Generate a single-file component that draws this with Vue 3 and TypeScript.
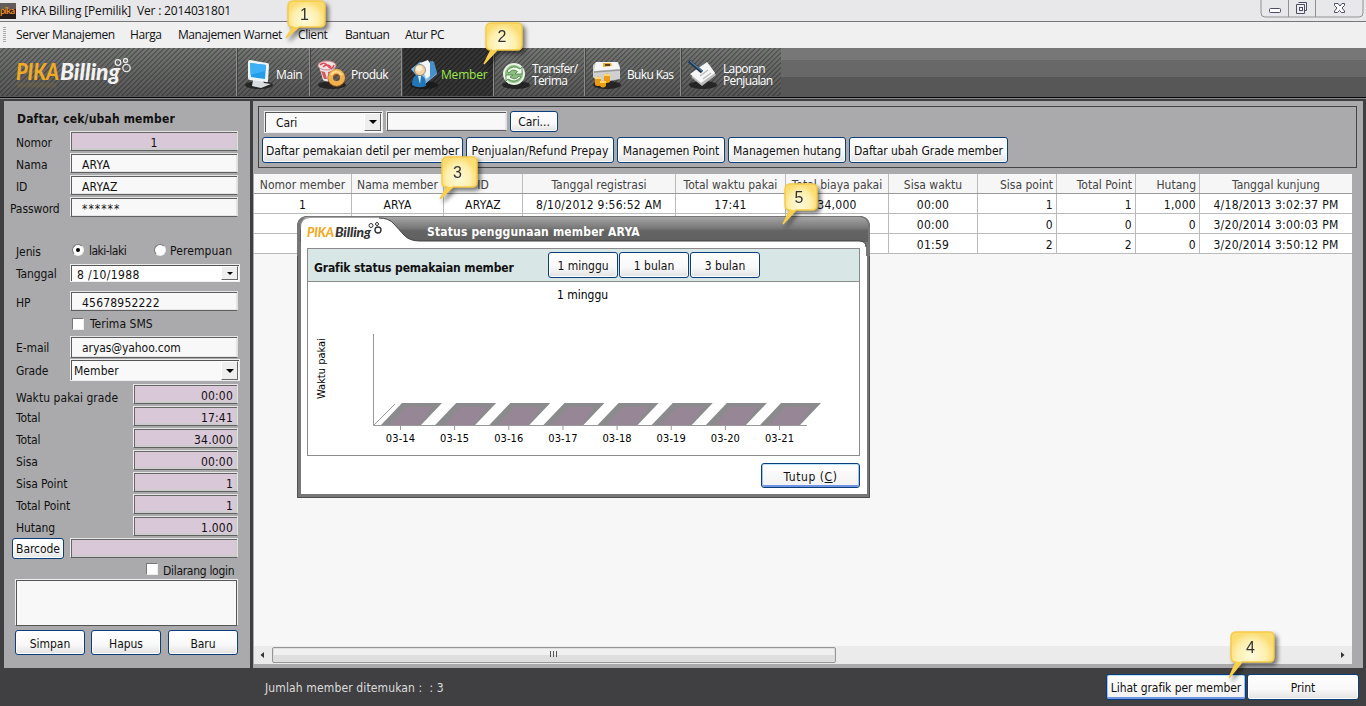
<script setup lang="ts">
interface Tool { id: string; label: string; width: number }
interface Column { title: string; width: number; align: 'center' | 'right' }

const menus = [
  { label: 'Server Manajemen', width: 114 },
  { label: 'Harga', width: 48 },
  { label: 'Manajemen Warnet', width: 120 },
  { label: 'Client', width: 47 },
  { label: 'Bantuan', width: 60 },
  { label: 'Atur PC', width: 60 },
]
const tools: Tool[] = [
  { id: 'main', label: 'Main', width: 73 },
  { id: 'produk', label: 'Produk', width: 92 },
  { id: 'member', label: 'Member', width: 92 },
  { id: 'transfer', label: 'Transfer/\nTerima', width: 91 },
  { id: 'kas', label: 'Buku Kas', width: 96 },
  { id: 'laporan', label: 'Laporan\nPenjualan', width: 101 },
]
const identity = [
  { label: 'Nomor', value: '1', cls: 'locked mid' },
  { label: 'Nama', value: 'ARYA', cls: '' },
  { label: 'ID', value: 'ARYAZ', cls: '' },
  { label: 'Password', value: '******', cls: 'wide' },
]
const totals = [
  { label: 'Waktu pakai grade', value: '00:00' },
  { label: 'Total', value: '17:41' },
  { label: 'Total', value: '34.000' },
  { label: 'Sisa', value: '00:00' },
  { label: 'Sisa Point', value: '1' },
  { label: 'Total Point', value: '1' },
  { label: 'Hutang', value: '1.000' },
]
const actions = [
  { label: 'Daftar pemakaian detil per member', width: 201 },
  { label: 'Penjualan/Refund Prepay', width: 148 },
  { label: 'Managemen Point', width: 108 },
  { label: 'Managemen hutang', width: 118 },
  { label: 'Daftar ubah Grade member', width: 159 },
]
const columns: Column[] = [
  { title: 'Nomor member', width: 98, align: 'center' },
  { title: 'Nama member', width: 92, align: 'center' },
  { title: 'ID', width: 79, align: 'center' },
  { title: 'Tanggal registrasi', width: 153, align: 'center' },
  { title: 'Total waktu pakai', width: 110, align: 'center' },
  { title: 'Total biaya pakai', width: 103, align: 'center' },
  { title: 'Sisa waktu', width: 89, align: 'center' },
  { title: 'Sisa point', width: 79, align: 'right' },
  { title: 'Total Point', width: 79, align: 'right' },
  { title: 'Hutang', width: 64, align: 'right' },
  { title: 'Tanggal kunjung', width: 152, align: 'center' },
]
const rows: string[][] = [
  ['1', 'ARYA', 'ARYAZ', '8/10/2012 9:56:52 AM', '17:41', '34,000', '00:00', '1', '1', '1,000', '4/18/2013 3:02:37 PM'],
  ['', '', '', '', '', '', '00:00', '0', '0', '0', '3/20/2014 3:00:03 PM'],
  ['', '', '', '', '', '', '01:59', '2', '2', '0', '3/20/2014 3:50:12 PM'],
]
const gridColumns = columns.map((c) => c.width + 'px').join(' ')
const days = ['03-14', '03-15', '03-16', '03-17', '03-18', '03-19', '03-20', '03-21']
const callouts = [
  { n: 1, x: 284, y: 0, w: 38, h: 27, tail: 11 },
  { n: 2, x: 482, y: 22, w: 37, h: 28, tail: 14 },
  { n: 3, x: 438, y: 156, w: 36, h: 31, tail: 12 },
  { n: 4, x: 1227, y: 631, w: 44, h: 31, tail: 16 },
  { n: 5, x: 781, y: 183, w: 33, h: 27, tail: 14 },
]
</script>

<template>
  <div class="window">
    <header class="titlebar">
      <svg class="app-icon" width="16" height="16"><rect width="16" height="16" fill="#251d1b" /><path d="M0 0H16V6H0Z" fill="#625d5b" /><text x="0" y="11" textLength="15" font-family="Lato" font-size="9" font-weight="700" fill="#e78c28">pika</text></svg>
      <span>PIKA Billing [Pemilik]&nbsp; Ver : 2014031801</span>
      <svg class="controls" width="104" height="19" fill="none">
        <path d="M1 -1V13Q1 17 5 17H99Q103 17 103 13V-1M28.500 0V17M55.500 0V17" stroke="#929295" />
        <rect x="9.500" y="8.500" width="11" height="4" rx="1" fill="#fff" stroke="#4d4d68" />
        <path d="M38.500 2.500H46.500V10.500H44.500M36.500 4.500H44.500V13.500H36.500Z" fill="#eee" stroke="#4d4d68" />
        <rect x="39.500" y="7.500" width="3" height="3" fill="#fff" stroke="#4d4d68" />
        <path d="M74.500 3.500H78L80 6L82 3.500H84.500V5.500L82 8L84.500 11V12.500H81.500L79.500 10.500L77.500 12.500H74.500V11L77 8L74.500 5.500Z" fill="#fff" stroke="#4d4d68" />
      </svg>
    </header>
    <nav class="menubar">
      <i class="grip"></i>
      <span v-for="m in menus" :key="m.label" :style="{ width: m.width + 'px' }">{{ m.label }}</span>
    </nav>

    <div class="toolbar">
      <div class="brand">
        <svg width="130" height="44">
          <text x="0" y="32" font-family="Lato" font-size="22" font-style="italic" font-weight="900" textLength="43" lengthAdjust="spacingAndGlyphs" fill="#f0aa25">PIKA</text>
          <text x="44" y="32" font-family="Lato" font-size="22" font-style="italic" font-weight="900" textLength="60" lengthAdjust="spacingAndGlyphs" fill="#f2f2f2">Billing</text>
          <path d="M1 37H40" stroke="#9a7838" stroke-width="5" opacity=".2" />
          <g fill="none" stroke="#e8e8e8" stroke-width="1.300"><circle cx="102" cy="14.500" r="2.800" /><circle cx="109.500" cy="12.500" r="2" /><circle cx="110.500" cy="20" r="3.700" /></g>
        </svg>
      </div>
      <div v-for="t in tools" :key="t.id" class="tool" :class="[t.id, { active: t.id === 'member' }]" :style="{ width: t.width + 'px' }">
        <svg width="32" height="34" viewBox="0 0 32 34">
          <ellipse cx="16" cy="28" rx="14" ry="4" fill="#151515" opacity=".75" />
          <g v-if="t.id === 'main'">
            <path d="M10 23L19 22L21 26L28 27L18 31L9 29Z" fill="#d9dde0" />
            <path d="M5 5Q5 3 7 3L24 6Q26 6 26 8L25 24Q25 26 23 25L7 23Q5 23 5 21Z" fill="#eef4f8" />
            <path d="M7 6L23 8L22 22L8 20Z" fill="#239ced" /><path d="M7 6L23 8L22.500 14L7.500 18Z" fill="#3eb0f6" />
          </g>
          <g v-else-if="t.id === 'produk'">
            <path d="M3 9L7 23Q12 26 16 23L19 9Z" fill="#e9e4e4" /><path d="M5 14L8 22L11 22L9 15ZM12 15L13 23L16 21L17 14Z" fill="#d95760" />
            <ellipse cx="11" cy="8.500" rx="9" ry="4.500" fill="#f2e2e2" stroke="#c98d91" /><path d="M4 8Q8 4 12 9T18 8M7 10Q11 6 15 10" fill="none" stroke="#dc4b57" stroke-width="1.600" />
            <circle cx="20.500" cy="21" r="6" fill="none" stroke="#8e4c18" stroke-width="6" /><circle cx="20.500" cy="20.500" r="6" fill="none" stroke="#efb050" stroke-width="5" /><path d="M15 18Q20 11 26 18" fill="none" stroke="#ffdc91" stroke-width="2" />
          </g>
          <g v-else-if="t.id === 'member'">
            <path d="M3 12L12 5L17 8L25 4L29 17L16 28Z" fill="#84b9df" /><path d="M12 6L20 3L27 15L18 22Z" fill="#f0f6fa" /><path d="M22 4L26 5L29 16L22 22Z" fill="#468fca" />
            <path d="M4 28Q4 17 11 18Q18 18 18 29Q10 32 4 28Z" fill="#2475b5" /><path d="M10 19L13 19L12 27Z" fill="#d7efff" /><circle cx="12" cy="13" r="5.500" fill="#f4d2a2" stroke="#7d6f62" stroke-width=".7" /><circle cx="11" cy="11.500" r="3" fill="#fff0d5" />
          </g>
          <g v-else-if="t.id === 'transfer'">
            <circle cx="14" cy="17" r="11" fill="#e9f4e5" /><circle cx="14" cy="17" r="9" fill="#8abd7e" />
            <path transform="translate(-2 0)" d="M9 14Q15 7 22 12L24 10V17H17L19.500 14.500Q14 11 11 16ZM23 20Q17 27 10 22L8 24V18H15L12 20Q17 24 21 19Z" fill="#edf8e9" stroke="#4c7e4a" stroke-width=".8" />
          </g>
          <g v-else-if="t.id === 'kas'">
            <path d="M2 8L5 5H27L29 10V22L8 26L2 20Z" fill="#d0d0d0" /><path d="M5 5H26L29 12L3 14Z" fill="#f5f5f5" /><path d="M3 15L29 13" stroke="#999" stroke-width="1.500" /><path d="M12 6L20 6L21 9L12 10Z" fill="#e8aa38" /><path d="M14 7H19V9H14Z" fill="#594022" />
            <path d="M4 21Q7 18 10 21V28Q7 30 4 28ZM13 18Q16 15 19 18V25Q16 27 13 25ZM9 25Q12 22 15 25V29Q12 32 9 29Z" fill="#ed9b16" /><path d="M4 21H10M13 18H19M9 25H15" stroke="#ffd96b" stroke-width="2" />
          </g>
          <g v-else>
            <path d="M4 20L22 7L29 18L15 29Z" fill="#b9b9b9" /><path d="M3 17L20 5L28 16L14 26Z" fill="#f6f6f6" /><path d="M13 19L21 13M16 22L24 16" stroke="#bdbdbd" stroke-width="1.500" />
            <path d="M2 4L15 15" stroke="#1e354d" stroke-width="3.500" /><path d="M3 4L15 14" stroke="#557fa6" stroke-width="1.200" />
          </g>
        </svg>
        <b>{{ t.label }}</b>
      </div>
    </div>

    <main class="frame">
      <aside class="sidebar">
        <h2>Daftar, cek/ubah member</h2>
        <div class="stack">
          <div v-for="f in identity" :key="f.label" class="row"><label :class="{ outdent: f.cls === 'wide' }">{{ f.label }}</label><div class="field" :class="f.cls">{{ f.value }}</div></div>
        </div>
        <div class="row gender"><label>Jenis</label><i class="radio on"></i><span class="tight">laki-laki</span><i class="radio second"></i><span>Perempuan</span></div>
        <div class="row date"><label>Tanggal</label><div class="combo">8 /10/1988<i class="drop"></i></div></div>
        <div class="row phone"><label>HP</label><div class="field">45678952222</div></div>
        <div class="check sms"><i></i>Terima SMS</div>
        <div class="row mail"><label>E-mail</label><div class="field">aryas@yahoo.com</div></div>
        <div class="row grade"><label>Grade</label><div class="combo">Member<i class="drop"></i></div></div>
        <div class="stack sums">
          <div v-for="(f, i) in totals" :key="i" class="row"><label>{{ f.label }}</label><div class="field locked num">{{ f.value }}</div></div>
        </div>
        <div class="row barcode"><button>Barcode</button><div class="field locked"></div></div>
        <div class="check login"><i></i>Dilarang login</div>
        <div class="memo"></div>
        <div class="buttons"><button>Simpan</button><button>Hapus</button><button>Baru</button></div>
      </aside>

      <section class="content">
        <div class="filter">
          <div class="search"><div class="combo">Cari<i class="drop"></i></div><div class="field"></div><button>Cari...</button></div>
          <div class="actions"><button v-for="a in actions" :key="a.label" :style="{ width: a.width + 'px' }">{{ a.label }}</button></div>
        </div>
        <div class="table">
          <div class="line head" :style="{ gridTemplateColumns: gridColumns }"><span v-for="c in columns" :key="c.title" :class="c.align">{{ c.title }}</span></div>
          <div v-for="(r, y) in rows" :key="y" class="line" :style="{ gridTemplateColumns: gridColumns }"><span v-for="(v, x) in r" :key="x" :class="columns[x].align">{{ v }}</span></div>
          <div class="scroll">
            <svg width="1098" height="18">
              <path d="M10 6V12L6.500 9ZM1087 6V12L1090.500 9Z" fill="#333" />
              <rect x="18.500" y="1.500" width="563" height="15" rx="1.500" fill="#dedede" stroke="#969696" /><rect x="20" y="3" width="560" height="6" fill="#f0f0f0" />
              <path d="M296.500 5V11M299.500 5V11M302.500 5V11" stroke="#555" />
            </svg>
          </div>
        </div>
      </section>
    </main>

    <footer class="status"><span>Jumlah member ditemukan :&nbsp; : 3</span><button class="focus">Lihat grafik per member</button><button class="print">Print</button></footer>

    <section class="dialog">
      <svg class="dialog-top" width="573" height="40">
        <defs><linearGradient id="bar" x1="0" y1="0" x2="0" y2="1"><stop offset="0" stop-color="#a5a5a5" /><stop offset=".45" stop-color="#777" /><stop offset=".55" stop-color="#646464" /><stop offset="1" stop-color="#606060" /></linearGradient></defs>
        <path d="M0 40V11Q0 0 11 0H562Q573 0 573 11V40Z" fill="#777" /><path d="M8 1H562Q571 1 571 11V26H3V7Z" fill="url(#bar)" />
        <path d="M4 40V12Q4 2 13 2H82Q92 2 97 8L107 19Q112 25 123 25H562Q569 25 569 31V40Z" fill="#fff" /><path d="M82 2Q92 2 97 8L107 19Q112 25 123 25H562Q569 25 569 31" fill="none" stroke="#424242" />
        <text x="10" y="21" font-family="Lato" font-size="14" font-style="italic" font-weight="900" textLength="27" lengthAdjust="spacingAndGlyphs" fill="#f0aa25">PIKA</text>
        <text x="38" y="21" font-family="Lato" font-size="14" font-style="italic" font-weight="900" textLength="36" lengthAdjust="spacingAndGlyphs" fill="#333">Billing</text>
        <g fill="none" stroke="#333"><circle cx="74" cy="9.500" r="2" /><circle cx="80" cy="8" r="1.500" /><circle cx="81" cy="14" r="3" stroke-width="1.400" /></g>
      </svg>
      <h3>Status penggunaan member ARYA</h3>
      <div class="panel">
        <div class="panel-head"><strong>Grafik status pemakaian member</strong><button>1 minggu</button><button>1 bulan</button><button>3 bulan</button></div>
        <svg width="551" height="173" class="chart">
          <text x="274.500" y="17" text-anchor="middle" class="t12">1 minggu</text>
          <text class="t11" transform="translate(17 117) rotate(-90)" textLength="61">Waktu pakai</text>
          <path d="M65.500 52V143.500H499M66 143L87 122" fill="none" stroke="#999" />
          <g v-for="(d, i) in days" :key="d" :transform="`translate(${i * 54.15} 0)`">
            <path d="M73 143L94 121H134L113 143Z" fill="#8b8b8d" /><path d="M82 143L98 125H124L112 143Z" fill="#978796" />
            <path d="M92.500 144V148" stroke="#999" /><text x="92.500" y="160" text-anchor="middle" class="t11">{{ d }}</text>
          </g>
        </svg>
      </div>
      <button class="focus close">Tutup (<u>C</u>)</button>
    </section>

    <svg v-for="c in callouts" :key="c.n" class="callout" width="60" height="60" :style="{ left: c.x + 'px', top: c.y + 'px' }">
      <defs><radialGradient id="note"><stop offset="0" stop-color="#fffbdc" /><stop offset=".65" stop-color="#fdefae" /><stop offset="1" stop-color="#fbdc70" /></radialGradient></defs>
      <path :d="`M10 1H${c.w - 2}Q${c.w + 3} 1 ${c.w + 3} 6V${c.h - 5}Q${c.w + 3} ${c.h} ${c.w - 2} ${c.h}H15L2 ${c.h + c.tail}L9 ${c.h}Q4 ${c.h} 4 ${c.h - 5}V6Q4 1 10 1Z`" fill="url(#note)" stroke="#f6cb48" stroke-width="1.500" />
      <path :d="`M9 ${c.h}H15L2 ${c.h + c.tail}Z`" fill="#f9cf50" />
      <text :x="c.w / 2 + 1.5" :y="c.h / 2 + 6" text-anchor="middle">{{ c.n }}</text>
    </svg>
  </div>
</template>

<style>
html, body { margin: 0; overflow: hidden; }
</style>
<style scoped>
* { box-sizing: border-box; }
.window { position: relative; width: 1366px; height: 706px; display: flex; flex-direction: column; background: #404042; font: 12px/16px "DejaVu Sans Condensed", "DejaVu Sans", sans-serif; font-stretch: condensed; color: #111; overflow: hidden; letter-spacing: -.1px; white-space: nowrap; }
.titlebar { height: 22px; display: flex; background: #e8e8ea; border-bottom: 1px solid #777; font: 12px/21px "Open Sans", sans-serif; letter-spacing: -.17px; }
.app-icon { margin: 3px 5px 0 0; }
.controls { margin-left: auto; margin-right: 2px; }
.menubar { height: 26px; display: flex; background: #f0f0f1; font: 12px/26px "Open Sans", sans-serif; letter-spacing: -.42px; }
.grip { width: 3px; height: 15px; margin: 5px 10px 0 3px; background: repeating-linear-gradient(#aaa 0 1px, transparent 1px 2px); }
.menubar span { flex: none; }
.toolbar { position: relative; height: 50px; display: flex; background: linear-gradient(#777 0 12px, #686868 12px 29px, #575757 29px 48px); border-bottom: 1px solid #060606; box-shadow: 0 1px #888; flex: none; }
.brand, .tool { height: 48px; background: repeating-linear-gradient(135deg, transparent 0 2.500px, rgba(20,20,20,.3) 2.500px 3.540px), linear-gradient(#737573, #555655); }
.brand { width: 236px; padding-left: 16px; }
.tool { display: flex; align-items: center; border-left: 1px solid #8c8c8c; box-shadow: inset 1px 0 #444; padding: 4px 0 0 6px; color: #fff; }
.tool b { font: 500 12px/12px "Open Sans", sans-serif; white-space: pre; letter-spacing: -.4px; padding-top: 2px; }
.tool.main b { margin-left: 1px; letter-spacing: -.4px; }
.tool.produk b { margin-left: 3px; letter-spacing: -.55px; }
.tool.transfer b { letter-spacing: -.65px; }
.tool.kas b, .tool.laporan b { margin-left: 4px; letter-spacing: -.65px; }
.tool.active { background: repeating-linear-gradient(135deg, transparent 0 2.500px, #252525 2.500px 3.540px), #353535; color: #9be84a; }
.tool.active b { letter-spacing: -.2px; margin-left: 1px; }
.frame { height: 571px; display: flex; padding: 4px 3px 0 4px; background: #3f3f41; margin-top: -1px; }
.sidebar { width: 246px; height: 567px; background: #aaaaac; overflow: hidden; }
h2 { margin: 10px 0 4px 13px; font-size: 12px; line-height: 16px; letter-spacing: .17px; }
.stack { display: flex; flex-direction: column; gap: 2px; }
.row { display: flex; height: 20px; width: 234px; padding-left: 12px; }
.row label { width: 54px; line-height: 16px; padding-top: 4px; flex: none; }
.row label.outdent { margin-left: -6px; width: 60px; }
.field { flex: 1; border: 1px solid; border-color: #e6e6e6 #e0e0e0 #606060 #eee; box-shadow: inset 1px 1px #5c5c5c, inset -1px -1px #e5e5e5; background: #f8f8f8; padding: 2px 0 0 11px; line-height: 18px; letter-spacing: .2px; }
.field.wide { letter-spacing: 1px; }
.field.locked { background: #d8c8d8; box-shadow: inset 1px 1px #666, inset -2px -2px #ccc; }
.field.mid { text-align: center; padding-left: 0; }
.row .num { flex: none; width: 105px; margin-left: auto; text-align: right; padding: 2px 4px 0 0; }
.sums label { width: 110px; }
.sums .row:first-child label { padding-top: 6px; letter-spacing: .05px; }
.gender { margin-top: 23px; height: 20px; }
.radio { flex: none; width: 12px; height: 12px; border-radius: 50%; background: #fff; border: 1px solid #777; border-right-color: #eee; border-bottom-color: #eee; margin: 4px 5px 0 2px; display: flex; }
.radio.on::after { content: ""; width: 4px; height: 4px; background: #000; border-radius: 50%; margin: 3px; }
.radio.second { margin-left: auto; margin-right: 4px; }
.gender span { padding-top: 3px; }
.gender span:last-child { width: 68px; letter-spacing: .1px; }
.tight { letter-spacing: -.5px; }
.combo { flex: 1; height: 100%; background: #f9f9f9; border: 1px solid #eee; box-shadow: inset 1px 1px #555; display: flex; padding: 1px 0 0 6px; line-height: 18px; margin-right: -2px; }
.drop { margin-left: auto; margin-right: 1px; width: 17px; height: calc(100% - 1px); background: #eee; border: 1px solid #fff; border-right-color: #666; border-bottom-color: #666; display: flex; justify-content: center; align-items: center; }
.drop::after { content: ""; border: 4px solid transparent; border-top-color: #000; border-bottom: 0; }
.date { margin-top: 4px; height: 18px; }
.date label { padding-top: 2px; }
.date .combo { background: #fff; letter-spacing: .4px; }
.date .drop::after { border-width: 3px 3px 0; }
.phone { margin-top: 9px; }
.check { display: flex; line-height: 16px; }
.check i { width: 12px; height: 12px; background: #fff; border: 1px solid #777; border-right-color: #eee; border-bottom-color: #eee; margin: 2px 6px 0 0; }
.sms { margin: 5px 0 0 68px; letter-spacing: .05px; }
.mail { height: 22px; margin-top: 4px; }
.mail .field { letter-spacing: -.08px; }
.grade { height: 22px; margin-top: 1px; }
.grade .combo { padding: 2px 0 0 3px; letter-spacing: .05px; }
.grade .drop { margin-top: -1px; height: 19px; }
.sums { margin-top: 3px; }
.barcode { margin-top: 2px; padding-left: 8px; }
.barcode button { width: 52px; height: 21px; margin-right: 6px; padding-top: 1px; }
button { border: 1px solid #0b3e7c; border-radius: 3px; background: linear-gradient(#fff, #f8f8f8 60%, #e2e2e2); box-shadow: inset 0 0 0 1px #fff; padding: 0; font: inherit; letter-spacing: -.04px; color: #111; height: 25px; flex: none; white-space: nowrap; display: flex; justify-content: center; align-items: center; }
.login { margin: 4px 0 0 142px; padding-top: 1px; height: 16px; letter-spacing: -.3px; }
.login i { margin: 0 5px 0 0; }
.memo { height: 47px; margin: 1px 12px 0 11px; background: #f8f8f8; border: 1px solid #eee; border-bottom-color: #555; box-shadow: inset 1px 1px #555, inset -1px 0 #555; }
.buttons { display: flex; gap: 6px; margin: 4px 0 0 11px; }
.buttons button { width: 70px; padding-top: 2px; }
.buttons button:last-child { margin-left: 1px; }
.content { width: 1110px; height: 567px; margin-left: 3px; background: #aaaaac; padding: 5px 6px 0 1px; }
.filter { width: 1099px; height: 62px; border: 1px solid #444; margin-left: 4px; padding: 4px 0 0 3px; }
.search { display: flex; height: 22px; padding-left: 2px; }
.search .combo { flex: none; width: 119px; margin: 0 3px 0 0; padding: 2px 0 0 11px; }
.search .drop { height: 18px; margin-top: -1px; }
.search .field { flex: none; width: 121px; height: 20px; margin-right: 3px; }
.search button { width: 48px; height: 21px; }
.actions { display: flex; gap: 3px; padding-top: 4px; }
.actions button { height: 26px; padding-top: 1px; }
.actions button:nth-child(2) { letter-spacing: .1px; }
.table { height: 490px; width: 1098px; margin-top: 6px; display: flex; flex-direction: column; background: #f7f7f7; }
.line { display: grid; height: 20px; background: #fff; border-bottom: 1px solid #bbb; flex: none; letter-spacing: .27px; }
.line.head { color: #444; background: #f6f6f6; border-bottom-color: #999; letter-spacing: 0; }
.line span { border-right: 1px solid #bbb; line-height: 18px; overflow: hidden; padding: 2px 3px 0; text-align: center; height: 19px; }
.line .right { text-align: right; }
.line span:last-child { border-right: 0; }
.scroll { margin-top: auto; height: 18px; background: #ebebeb; overflow: hidden; }
.status { height: 38px; display: flex; padding: 6px 7px 0 265px; color: #ddd; }
.status span { margin: 6px auto 0 0; letter-spacing: .13px; }
.status button { height: 26px; width: 140px; margin-right: 1px; padding-top: 1px; }
.status .print { width: 112px; margin: 0; }
.status .focus { letter-spacing: -.05px; }
button.focus { background: linear-gradient(#fff, #f1f1f1); box-shadow: inset 0 1px #bfe4fa, inset 1px 0 #9dc0f2, inset -1px 0 #9dc0f2, inset 0 -2px #6f94e4; }
.dialog { position: absolute; left: 297px; top: 216px; width: 573px; height: 282px; background: #fff; border: 4px solid #777; border-right-width: 3px; outline: 1px solid #505050; outline-offset: -1px; border-radius: 11px 11px 0 0; display: flex; flex-direction: column; }
.dialog-top { position: absolute; left: -4px; top: -4px; }
h3 { position: relative; margin: 4px 0 0 126px; font-size: 12px; line-height: 16px; color: #fff; letter-spacing: .17px; }
.panel { position: relative; margin: 8px 0 0 6px; width: 553px; height: 208px; border: 1px solid #8b8b8b; background: #fff; flex: none; }
.panel-head { height: 33px; background: #d8e6e6; border-bottom: 1px solid #8b8b8b; display: flex; padding: 3px 0 0 6px; gap: 1px; }
.panel-head strong { width: 233px; padding-top: 8px; letter-spacing: -.12px; }
.panel-head button { width: 70px; height: 26px; padding-top: 1px; }
.chart { display: block; }
.t12 { font-size: 12px; }
.t11 { font-size: 11px; letter-spacing: .1px; }
.panel-head button, .t12 { letter-spacing: 0; }
.close { width: 99px; margin: 7px 0 0 460px; padding-top: 2px; letter-spacing: .55px; }
.callout { position: absolute; filter: drop-shadow(3px 3px 2px rgba(0,0,0,.5)); overflow: visible; }
.callout text { font: 16px "Liberation Sans", sans-serif; fill: #333; }
</style>
